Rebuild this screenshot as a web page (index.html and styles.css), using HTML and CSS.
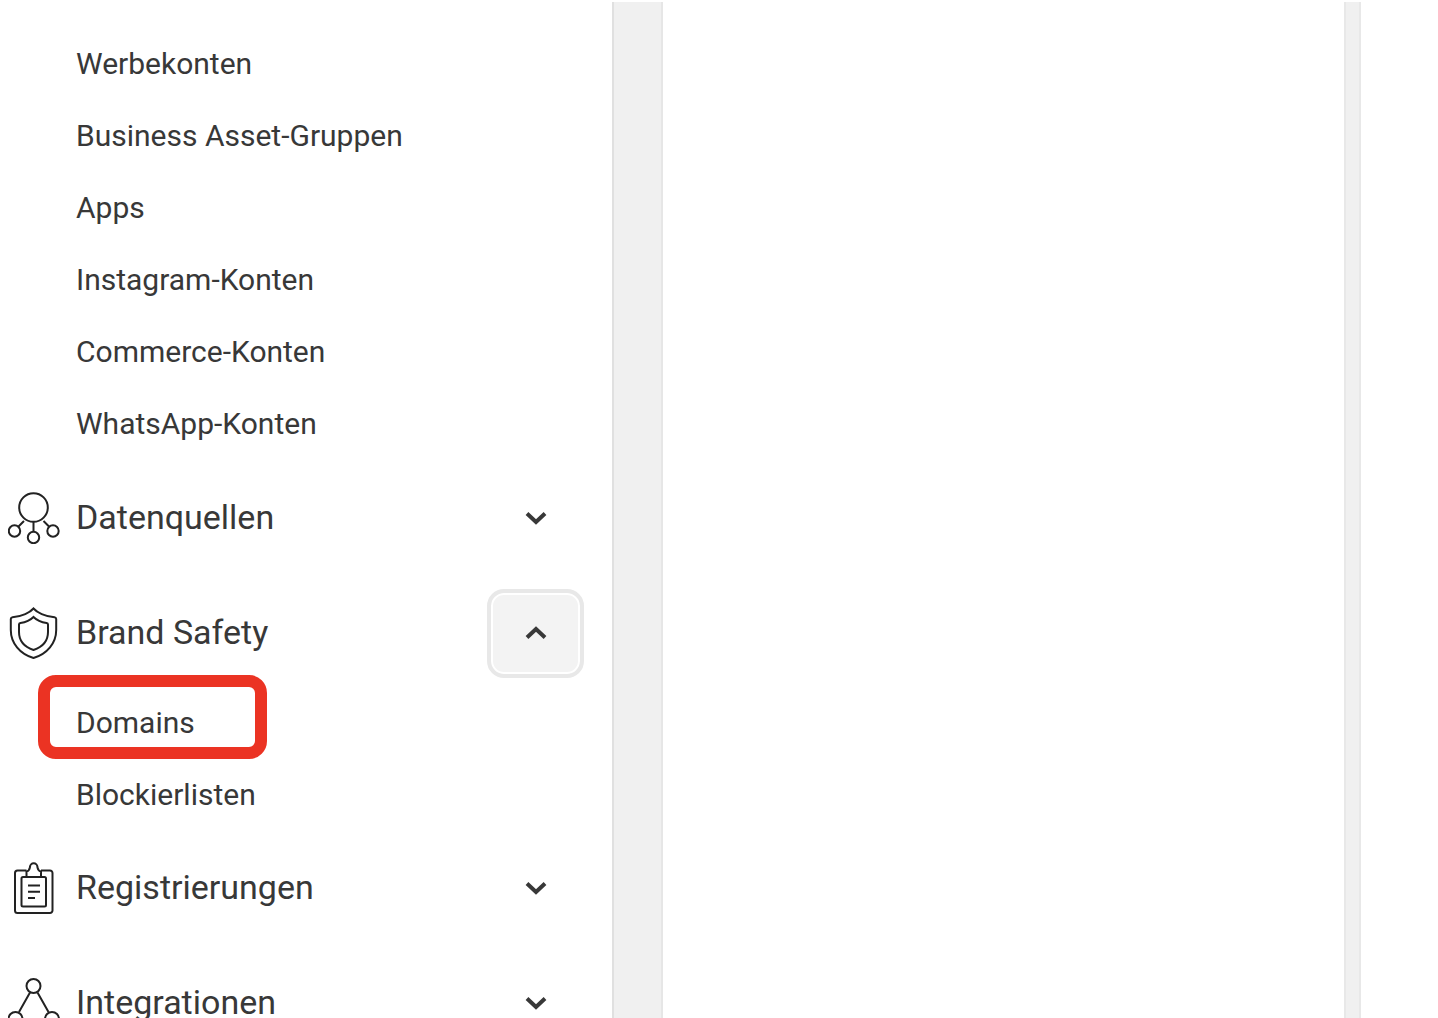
FILE: index.html
```html
<!DOCTYPE html>
<html lang="de">

<head>
    <meta charset="UTF-8">
    <meta name="viewport" content="width=device-width, initial-scale=1.0">
    <title>Unternehmenseinstellungen</title>
    <link rel="stylesheet" href="styles.css">
</head>

<body>
    <div class="layout">
        <nav class="sidebar">
            <ul class="sublist scrolled">
                <li><a href="#">Seiten</a></li>
                <li><a href="#">Werbekonten</a></li>
                <li><a href="#">Business Asset-Gruppen</a></li>
                <li><a href="#">Apps</a></li>
                <li><a href="#">Instagram-Konten</a></li>
                <li><a href="#">Commerce-Konten</a></li>
                <li><a href="#">WhatsApp-Konten</a></li>
            </ul>

            <div class="group">
                <svg class="icon" viewBox="0 0 52 52">
                    <circle cx="25.500" cy="15.500" r="14.300"/>
                    <circle cx="6.500" cy="39" r="5.700"/>
                    <circle cx="25.500" cy="45.500" r="5.700"/>
                    <circle cx="45" cy="39" r="5.700"/>
                    <path d="M10.500 34.500l5.500-5.500M25.500 30v9.500M35.500 29l5.500 5.500"/>
                </svg>
                <h2>Datenquellen</h2>
                <button class="toggle" type="button" aria-label="Datenquellen">
                    <svg class="chevron" viewBox="0 0 24 16"><path d="M3 3.500l9 8.500 9-8.500"/></svg>
                </button>
            </div>

            <div class="group">
                <svg class="icon" viewBox="0 0 52 52">
                    <path d="M25.500 1.500C22 5.500 14 9.500 4.500 10.200Q2.800 10.500 2.800 12V23c0 13 9 24 22.700 28 13.700-4 22.700-15 22.700-28V12Q48.200 10.500 46.500 10.200C37 9.500 29 5.500 25.500 1.500z"/>
                    <path d="M25.500 10c-3 3-8 5.300-13 6q-1.500.300-1.500 1.500V25c0 8.500 5.500 15 14.500 18 9-3 14.500-9.500 14.500-18v-7.500q0-1.200-1.500-1.500c-5-.700-10-3-13-6z"/>
                </svg>
                <h2>Brand Safety</h2>
                <button class="toggle active" type="button" aria-label="Brand Safety" aria-expanded="true">
                    <svg class="chevron" viewBox="0 0 24 16"><path d="M3 12.500L12 4l9 8.500"/></svg>
                </button>
            </div>
            <ul class="sublist">
                <li class="marked"><a href="#">Domains</a></li>
                <li><a href="#">Blockierlisten</a></li>
            </ul>

            <div class="group">
                <svg class="icon" viewBox="0 0 52 52">
                    <path d="M18.500 8.500H9.500a2.500 2.500 0 0 0-2.500 2.500v37.500A2.500 2.500 0 0 0 9.500 51h32.500a2.500 2.500 0 0 0 2.500-2.500V11a2.500 2.500 0 0 0-2.500-2.500H33"/>
                    <path d="M18.500 15V9.500c3-.500 3-2.500 3.500-4.500a3.700 3.700 0 0 1 7.400 0c.500 2 .500 4 3.600 4.500V15"/>
                    <rect x="13.500" y="15" width="24.500" height="29.500" rx="1.500"/>
                    <path d="M20 23.500h12M20 29.700h12M20 36h7"/>
                </svg>
                <h2>Registrierungen</h2>
                <button class="toggle" type="button" aria-label="Registrierungen">
                    <svg class="chevron" viewBox="0 0 24 16"><path d="M3 3.500l9 8.500 9-8.500"/></svg>
                </button>
            </div>

            <div class="group">
                <svg class="icon" viewBox="0 0 52 52">
                    <circle cx="25.500" cy="9" r="7"/>
                    <circle cx="7.500" cy="42" r="7"/>
                    <circle cx="44" cy="42" r="7"/>
                    <path d="M22 15.500L11 35M29.500 15.500L40.500 35M15 42h22"/>
                </svg>
                <h2>Integrationen</h2>
                <button class="toggle" type="button" aria-label="Integrationen">
                    <svg class="chevron" viewBox="0 0 24 16"><path d="M3 3.500l9 8.500 9-8.500"/></svg>
                </button>
            </div>
        </nav>

        <div class="gutter"></div>
        <main></main>
        <div class="gutter narrow"></div>
        <aside></aside>
    </div>
</body>

</html>
```

FILE: styles.css
```css
* {
    box-sizing: border-box;
}

body {
    margin: 0;
    background-color: #fff;
    color: #383838;
    font-family: Roboto, Arial, sans-serif;
}

.layout {
    display: flex;
    height: 100vh;
    padding-top: 2px;
    overflow: hidden;
}

.sidebar {
    width: 612px;
    flex-shrink: 0;
    overflow: hidden;
}

.sublist {
    list-style: none;
    margin: 0 0 3px;
    padding: 0 0 0 76px;
}

/* first entries are scrolled out of view */
.scrolled {
    margin: -46px 0 4px;
}

.sublist li {
    position: relative;
    height: 72px;
}

.sublist a {
    color: #383838;
    font-size: 30px;
    line-height: 72px;
    text-decoration: none;
}

.marked::before {
    content: "";
    box-sizing: border-box;
    position: absolute;
    top: -12px;
    left: -38px;
    width: 229px;
    height: 84px;
    border: 12px solid #eb3323;
    border-radius: 18px;
    pointer-events: none;
}

.group {
    display: flex;
    align-items: center;
    height: 108px;
    padding: 0 28px 0 8px;
}

.group + .group {
    margin-top: 7px;
}

.group h2 {
    flex: 1;
    margin: 0 0 0 16px;
    padding-bottom: 2px;
    font-size: 34px;
    font-weight: 400;
}

.icon {
    width: 52px;
    height: 52px;
    fill: none;
    stroke: #222;
    stroke-width: 2;
}

.toggle {
    display: flex;
    align-items: center;
    justify-content: center;
    width: 97px;
    height: 89px;
    padding: 0;
    background: none;
    border: 4px solid transparent;
    border-radius: 17px;
}

.toggle.active {
    background-color: #f3f3f3;
    border-color: #e8e8e8;
    box-shadow: inset 0 0 0 2px #fff;
}

.chevron {
    width: 24px;
    height: 16px;
    fill: none;
    stroke: #383838;
    stroke-width: 4;
}

.gutter {
    width: 51px;
    flex-shrink: 0;
    background-color: #f0f0f0;
    border-left: 2px solid #e0e0e0;
    border-right: 2px solid #e6e6e6;
}

.narrow {
    width: 17px;
    border-color: #e8e8e8;
}

main {
    flex: 1;
}

aside {
    width: 77px;
    flex-shrink: 0;
}
```
